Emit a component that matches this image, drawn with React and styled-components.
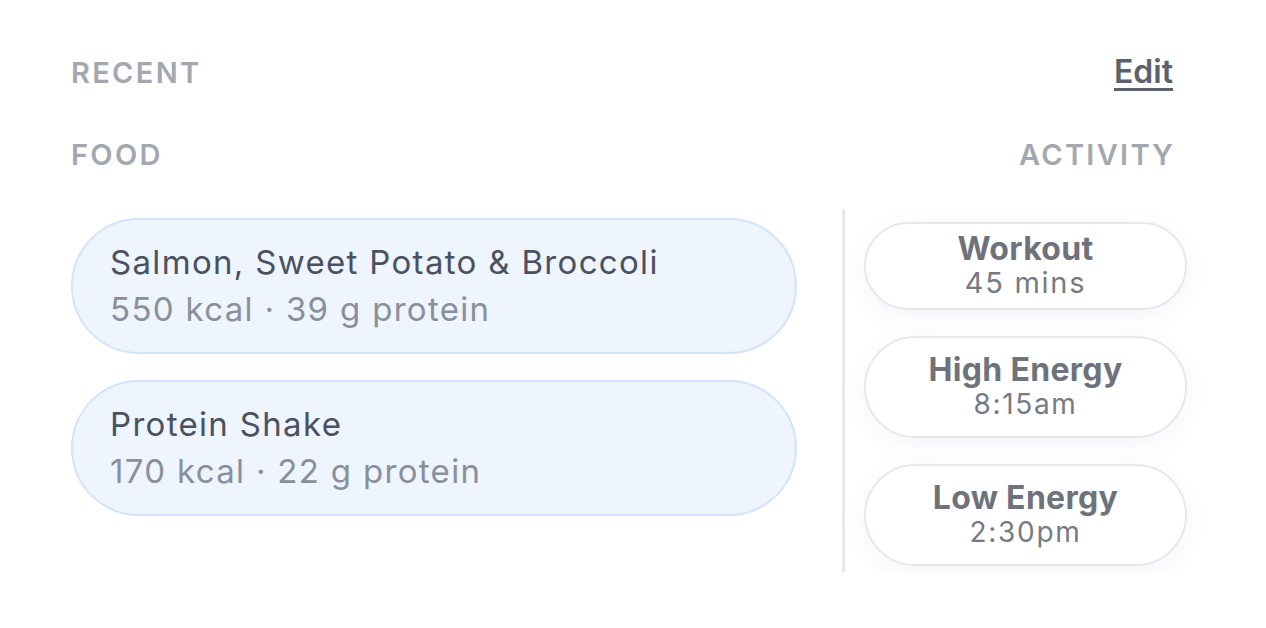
import React from 'react';
import styled, { createGlobalStyle } from 'styled-components';

const GlobalStyle = createGlobalStyle`
  body {
    margin: 0;
    background: #ffffff;
    font-family: Inter, "Noto Sans", "Liberation Sans", sans-serif;
    -webkit-font-smoothing: antialiased;
  }
`;

const Page = styled.div`
  width: 1116px;
  padding: 54px 0 0 71px;
`;

const HeaderRow = styled.div`
  display: flex;
  justify-content: space-between;
  align-items: baseline;
  padding-right: 14px;
  margin-bottom: ${(p) => p.gap}px;
`;

const Label = styled.div`
  font-size: 29px;
  line-height: 36px;
  font-weight: 600;
  letter-spacing: 0.08em;
  margin-right: -0.08em;
  color: #a3a8b0;
`;

const EditLink = styled.a`
  font-size: 32px;
  line-height: 36px;
  font-weight: 600;
  color: #5c626d;
  text-decoration: underline;
  text-decoration-thickness: 3px;
  text-underline-offset: 5px;
  cursor: pointer;
`;

const Body = styled.div`
  display: flex;
  align-items: stretch;
`;

const FoodList = styled.div`
  width: 726px;
  padding-top: 9px;
  display: flex;
  flex-direction: column;
  gap: 26px;
`;

const Divider = styled.div`
  width: 3px;
  margin: 0 19px 0 45px;
  background: #e4e9f0;
  height: 363px;
`;

const ActivityList = styled.div`
  width: 323px;
  padding-top: 13px;
  display: flex;
  flex-direction: column;
  gap: 26px;
`;

const FoodPill = styled.div`
  box-sizing: border-box;
  height: 136px;
  padding-left: 37px;
  display: flex;
  flex-direction: column;
  justify-content: center;
  background: #eef5ff;
  border: 2px solid #d3e3fb;
  border-radius: 68px;
`;

const FoodName = styled.div`
  font-size: 33px;
  line-height: 47px;
  letter-spacing: 0.04em;
  color: #4a5160;
`;

const FoodMeta = styled.div`
  font-size: 33px;
  line-height: 47px;
  letter-spacing: 0.04em;
  color: #8a909b;
`;

const ActivityPill = styled.div`
  box-sizing: border-box;
  padding: ${(p) => p.pad}px 0;
  display: flex;
  flex-direction: column;
  align-items: center;
  background: #ffffff;
  border: 2px solid #e6e8eb;
  border-radius: 60px;
  box-shadow: 0 6px 22px rgba(90, 120, 170, 0.07);
`;

const ActivityTitle = styled.div`
  font-size: 32px;
  line-height: 34px;
  font-weight: 700;
  letter-spacing: 0.01em;
  color: #6e737b;
`;

const ActivityMeta = styled.div`
  font-size: ${(p) => p.size}px;
  line-height: ${(p) => p.lh}px;
  letter-spacing: 0.06em;
  color: #767b83;
`;

const foods = [
  { name: 'Salmon, Sweet Potato & Broccoli', meta: '550 kcal · 39 g protein' },
  { name: 'Protein Shake', meta: '170 kcal · 22 g protein' },
];

const activities = [
  { title: 'Workout', meta: '45 mins', pad: 8, size: 29, lh: 34 },
  { title: 'High Energy', meta: '8:15am', pad: 15, size: 28, lh: 34 },
  { title: 'Low Energy', meta: '2:30pm', pad: 15, size: 28, lh: 34 },
];

export default function App() {
  return (
    <>
      <GlobalStyle />
      <Page>
        <HeaderRow gap={46}>
          <Label>RECENT</Label>
          <EditLink>Edit</EditLink>
        </HeaderRow>
        <HeaderRow gap={36}>
          <Label>FOOD</Label>
          <Label>ACTIVITY</Label>
        </HeaderRow>
        <Body>
          <FoodList>
            {foods.map((f) => (
              <FoodPill key={f.name}>
                <FoodName>{f.name}</FoodName>
                <FoodMeta>{f.meta}</FoodMeta>
              </FoodPill>
            ))}
          </FoodList>
          <Divider />
          <ActivityList>
            {activities.map((a) => (
              <ActivityPill key={a.title} pad={a.pad}>
                <ActivityTitle>{a.title}</ActivityTitle>
                <ActivityMeta size={a.size} lh={a.lh}>{a.meta}</ActivityMeta>
              </ActivityPill>
            ))}
          </ActivityList>
        </Body>
      </Page>
    </>
  );
}
